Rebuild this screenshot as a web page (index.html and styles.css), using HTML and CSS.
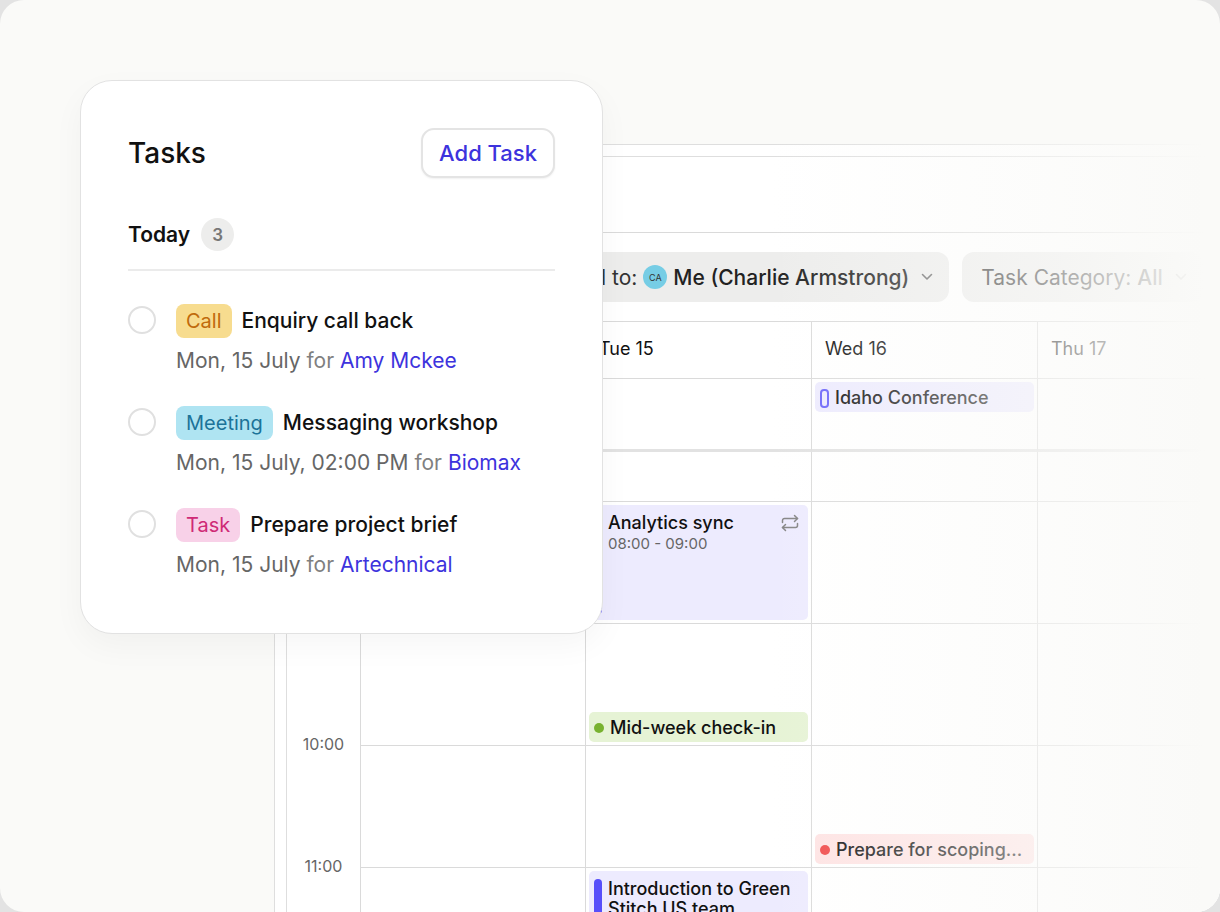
FILE: index.html
```html
<!DOCTYPE html>
<html lang="en">
  <head>
    <meta charset="UTF-8" />
    <meta name="viewport" content="width=device-width, initial-scale=1.0" />
    <title>Tasks</title>
    <link rel="stylesheet" href="styles.css">
  </head>
  <body>
    <div class="stage">
      <!-- Calendar -->
      <main class="window">
        <div class="calendar">
          <div class="topbar"></div>

          <div class="filters">
            <button class="filter" type="button">
              <span>Assigned to:</span>
              <span class="avatar">CA</span>
              <strong>Me (Charlie Armstrong)</strong>
              <svg class="chevron" width="12" height="8" viewBox="0 0 12 8" fill="none" stroke="#666" stroke-width="1.6" stroke-linecap="round" stroke-linejoin="round">
                <path d="M1.5 1.5 6 6l4.500-4.500" />
              </svg>
            </button>
            <button class="filter" type="button">
              <span>Task Category:</span>
              <strong>All</strong>
              <svg class="chevron" width="12" height="8" viewBox="0 0 12 8" fill="none" stroke="#666" stroke-width="1.6" stroke-linecap="round" stroke-linejoin="round">
                <path d="M1.5 1.5 6 6l4.500-4.500" />
              </svg>
            </button>
          </div>

          <div class="row days">
            <div class="axis"></div>
            <div class="cell"></div>
            <div class="cell">Tue 15</div>
            <div class="cell">Wed 16</div>
            <div class="cell">Thu 17</div>
          </div>

          <div class="row all-day">
            <div class="axis"></div>
            <div class="cell"></div>
            <div class="cell"></div>
            <div class="cell">
              <div class="event purple short">
                <span class="marker"></span>
                <span class="event-name">Idaho Conference</span>
              </div>
            </div>
            <div class="cell"></div>
          </div>

          <div class="row half">
            <div class="axis"></div>
            <div class="cell"></div>
            <div class="cell"></div>
            <div class="cell"></div>
            <div class="cell"></div>
          </div>

          <div class="row hour">
            <div class="axis"></div>
            <div class="cell"></div>
            <div class="cell">
              <div class="event purple tall">
                <span class="bar"></span>
                <div class="event-text">
                  <div class="event-name">Analytics sync</div>
                  <div class="event-time">08:00 - 09:00</div>
                </div>
                <svg class="repeat" width="20" height="20" viewBox="0 0 20 20" fill="none" stroke="#858585" stroke-width="1.5" stroke-linecap="round" stroke-linejoin="round">
                  <path d="M14.500 2.500 17.500 5.500 14.500 8.500" />
                  <path d="M2.500 9.500V7.500a2 2 0 0 1 2-2h13" />
                  <path d="M5.500 11.500 2.500 14.500 5.500 17.500" />
                  <path d="M17.500 10.500v2a2 2 0 0 1-2 2h-13" />
                </svg>
              </div>
            </div>
            <div class="cell"></div>
            <div class="cell"></div>
          </div>

          <div class="row hour">
            <div class="axis"></div>
            <div class="cell"></div>
            <div class="cell end">
              <div class="event green short">
                <span class="dot"></span>
                <span class="event-name">Mid-week check-in</span>
              </div>
            </div>
            <div class="cell"></div>
            <div class="cell"></div>
          </div>

          <div class="row hour">
            <div class="axis"><span class="time">10:00</span></div>
            <div class="cell"></div>
            <div class="cell"></div>
            <div class="cell end">
              <div class="event red short">
                <span class="dot"></span>
                <span class="event-name">Prepare for scoping...</span>
              </div>
            </div>
            <div class="cell"></div>
          </div>

          <div class="row hour">
            <div class="axis"><span class="time">11:00</span></div>
            <div class="cell"></div>
            <div class="cell">
              <div class="event purple tall">
                <span class="bar"></span>
                <div class="event-text">
                  <div class="event-name">Introduction to Green Stitch US team</div>
                </div>
              </div>
            </div>
            <div class="cell"></div>
            <div class="cell"></div>
          </div>
        </div>
      </main>

      <!-- Tasks -->
      <section class="card">
        <header class="card-header">
          <h1>Tasks</h1>
          <button class="add-btn" type="button">Add Task</button>
        </header>

        <div class="group">
          <h2>Today</h2>
          <span class="count">3</span>
        </div>

        <ul class="task-list">
          <li class="task">
            <input type="checkbox" id="task-1" />
            <div>
              <label class="task-title" for="task-1"><span class="tag call">Call</span>Enquiry call back</label>
              <p>Mon, 15 July <span>for</span> <a href="#">Amy Mckee</a></p>
            </div>
          </li>
          <li class="task">
            <input type="checkbox" id="task-2" />
            <div>
              <label class="task-title" for="task-2"><span class="tag meeting">Meeting</span>Messaging workshop</label>
              <p>Mon, 15 July, 02:00 PM <span>for</span> <a href="#">Biomax</a></p>
            </div>
          </li>
          <li class="task">
            <input type="checkbox" id="task-3" />
            <div>
              <label class="task-title" for="task-3"><span class="tag todo">Task</span>Prepare project brief</label>
              <p>Mon, 15 July <span>for</span> <a href="#">Artechnical</a></p>
            </div>
          </li>
        </ul>
      </section>
    </div>
  </body>
</html>
```

FILE: styles.css
```css
* {
  box-sizing: border-box;
}

body {
  margin: 0;
  background-color: #e3e3e3;
  font-family: Inter, "Liberation Sans", sans-serif;
  color: #111;
}

h1,
h2,
p,
ul {
  margin: 0;
  padding: 0;
}

button {
  font-family: inherit;
  cursor: pointer;
}

.stage {
  display: grid;
  grid-template-columns: minmax(0, 1fr);
  grid-template-rows: minmax(0, 1fr);
  height: 100vh;
  overflow: hidden;
  background-color: #fafaf8;
  border-radius: 24px;
}

/* both layers share one grid cell, the card sits on top */
.window,
.card {
  grid-area: 1 / 1;
}

/* Calendar */
.window {
  position: relative;
  margin: 144px 0 0 274px;
  padding: 11px 0 0 11px;
  background-color: #fff;
  border-top: 1px solid #dedede;
  border-left: 1px solid #dedede;
}

.window::after {
  content: "";
  position: absolute;
  top: -1px;
  right: 0;
  bottom: 0;
  width: 450px;
  background: linear-gradient(to right, rgba(250, 250, 248, 0), rgba(250, 250, 248, 0.6) 290px, #fafaf8 435px);
  pointer-events: none;
}

.calendar {
  border-top: 1px solid #dedede;
  border-left: 1px solid #dedede;
}

.topbar {
  height: 76px;
  border-bottom: 1px solid #dadada;
}

.filters {
  display: flex;
  gap: 13px;
  padding: 19px 0 19px 208px;
  border-bottom: 1px solid #dadada;
}

.filter {
  display: flex;
  flex: none;
  align-items: center;
  gap: 6px;
  height: 50px;
  padding: 0 16px 0 19px;
  border: none;
  border-radius: 12px;
  background-color: #ededec;
  font-size: 21px;
  color: #333;
}

.filter strong {
  font-weight: 500;
  color: #222;
}

.avatar {
  display: flex;
  align-items: center;
  justify-content: center;
  width: 24px;
  height: 24px;
  border-radius: 50%;
  background-color: #76cde5;
  font-size: 9px;
}

.chevron {
  margin-left: 6px;
}

.row {
  display: grid;
  grid-template-columns: 73px 225px repeat(3, minmax(226px, 1fr));
}

.cell {
  display: flex;
  flex-direction: column;
  padding: 3px;
  border-left: 1px solid #dadada;
  border-bottom: 1px solid #dadada;
}

.cell.end {
  justify-content: flex-end;
}

.days .cell {
  height: 57px;
  padding: 13px;
  font-size: 18px;
  line-height: 28px;
}

.all-day .cell {
  height: 73px;
  border-bottom: 3px solid #e2e2e2;
}

.half .cell {
  height: 50px;
}

.hour .cell {
  height: 122px;
}

.axis {
  text-align: center;
}

.time {
  display: block;
  margin-top: -12px;
  font-size: 16px;
  line-height: 20px;
  color: #666;
}

.event {
  display: flex;
  gap: 6px;
  padding: 0 5px;
  border-radius: 5px;
  font-size: 18px;
  line-height: 20px;
}

.event.short {
  align-items: center;
  height: 30px;
  padding-top: 2px;
}

.event.tall {
  flex: 1;
  padding: 8px 8px 6px 5px;
}

.purple {
  background-color: #edebfe;
}

.green {
  background-color: #e6f3d5;
}

.red {
  background-color: #fee3e3;
}

.event-name {
  font-weight: 500;
}

.event-text {
  flex: 1;
}

.event-time {
  font-size: 15px;
  line-height: 22px;
  color: #666;
}

.bar {
  flex: none;
  width: 8px;
  border-radius: 4px;
  background-color: #574ffa;
}

.marker {
  width: 9px;
  height: 19px;
  border: 2px solid #6a63fa;
  border-radius: 4px;
}

.dot {
  width: 10px;
  height: 10px;
  border-radius: 50%;
}

.green .dot {
  background-color: #78b22f;
}

.red .dot {
  background-color: #f04848;
}

/* Tasks card */
.card {
  position: relative;
  align-self: start;
  justify-self: start;
  width: 523px;
  margin: 80px 0 0 80px;
  padding: 47px 47px 52px;
  background-color: #fff;
  border: 1px solid #e2e2e2;
  border-radius: 32px;
  box-shadow: 0 12px 32px rgba(0, 0, 0, 0.04);
}

.card-header {
  display: flex;
  justify-content: space-between;
  align-items: center;
}

h1 {
  font-size: 28px;
  font-weight: 500;
}

.add-btn {
  height: 50px;
  padding: 0 16px;
  border: 2px solid #e4e4e4;
  border-radius: 13px;
  background-color: #fff;
  box-shadow: 0 1px 2px rgba(0, 0, 0, 0.06);
  font-size: 22px;
  font-weight: 500;
  color: #3d33dd;
}

.group {
  display: flex;
  align-items: center;
  gap: 11px;
  margin-top: 40px;
  padding-bottom: 18px;
  border-bottom: 2px solid #ebebeb;
}

h2 {
  font-size: 21px;
  font-weight: 600;
}

.count {
  display: flex;
  align-items: center;
  justify-content: center;
  width: 33px;
  height: 33px;
  border-radius: 50%;
  background-color: #ededec;
  font-size: 17px;
  font-weight: 600;
  color: #777;
}

.task-list {
  display: flex;
  flex-direction: column;
  gap: 29px;
  margin-top: 33px;
  list-style: none;
}

.task {
  display: flex;
  gap: 20px;
}

.task input {
  appearance: none;
  width: 28px;
  height: 28px;
  margin: 2px 0 0;
  border: 2px solid #e0e0e0;
  border-radius: 50%;
}

.task-title {
  display: flex;
  align-items: center;
  gap: 10px;
  font-size: 21px;
  font-weight: 500;
  line-height: 34px;
}

.task p {
  margin-top: 7px;
  font-size: 21px;
  line-height: 32px;
  color: #666;
}

.task p span {
  color: #808080;
}

.task a {
  color: #3d33dd;
  text-decoration: none;
}

.tag {
  padding: 0 10px;
  border-radius: 8px;
  font-size: 20px;
  font-weight: 400;
}

.call {
  background-color: #f7dc8f;
  color: #c06a0c;
}

.meeting {
  background-color: #afe4f2;
  color: #1c7399;
}

.todo {
  background-color: #f8d1e8;
  color: #cf2a76;
}
```
